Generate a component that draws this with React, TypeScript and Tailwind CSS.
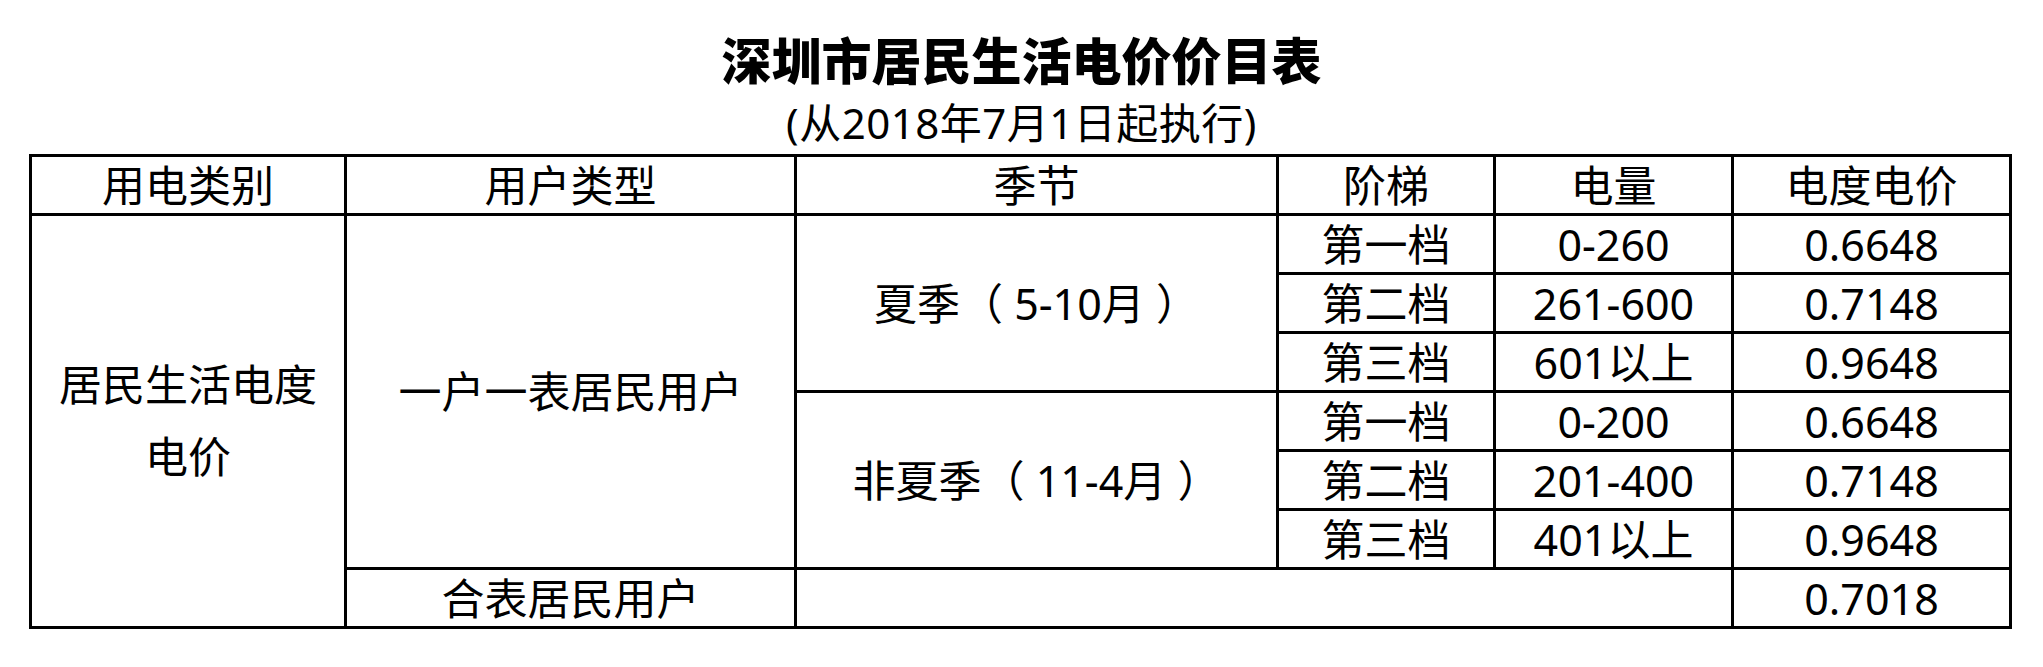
import React from "react";

const HEADERS = ["用电类别", "用户类型", "季节", "阶梯", "电量", "电度电价"];
const COLS = [315, 450, 482, 217, 238, 278];

const cell = "border-[3px] border-black p-0 text-center align-middle font-normal";

export default function App() {
  return (
    <div className="min-h-screen bg-white text-black font-['Noto_Sans','Noto_Sans_CJK_SC',sans-serif]">
      <div className="pt-[31px] text-center">
        <h1 className="text-[50px] leading-[60px] font-black">深圳市居民生活电价价目表</h1>
        <p className="mt-[8px] text-[42px] leading-[48px] tracking-[0.5px]">(从2018年7月1日起执行)</p>
      </div>

      <table className="ml-[29px] mt-[7px] w-[1983px] table-fixed border-collapse border-[3px] border-black text-[43px] leading-none">
        <colgroup>
          {COLS.map((w, i) => (
            <col key={i} style={{ width: w }} />
          ))}
        </colgroup>
        <thead>
          <tr className="h-[59px]">
            {HEADERS.map((h) => (
              <th key={h} className={cell}>
                {h}
              </th>
            ))}
          </tr>
        </thead>
        <tbody>
          <tr className="h-[59px]">
            <td rowSpan={7} className={`${cell} leading-[72px]`}>
              居民生活电度
              <br />
              电价
            </td>
            <td rowSpan={6} className={cell}>
              一户一表居民用户
            </td>
            <td rowSpan={3} className={`${cell} whitespace-pre`}>
              夏季（ 5-10月 ）
            </td>
            <td className={cell}>第一档</td>
            <td className={cell}>0-260</td>
            <td className={cell}>0.6648</td>
          </tr>
          <tr className="h-[59px]">
            <td className={cell}>第二档</td>
            <td className={cell}>261-600</td>
            <td className={cell}>0.7148</td>
          </tr>
          <tr className="h-[59px]">
            <td className={cell}>第三档</td>
            <td className={cell}>601以上</td>
            <td className={cell}>0.9648</td>
          </tr>
          <tr className="h-[59px]">
            <td rowSpan={3} className={`${cell} whitespace-pre`}>
              非夏季（ 11-4月 ）
            </td>
            <td className={cell}>第一档</td>
            <td className={cell}>0-200</td>
            <td className={cell}>0.6648</td>
          </tr>
          <tr className="h-[59px]">
            <td className={cell}>第二档</td>
            <td className={cell}>201-400</td>
            <td className={cell}>0.7148</td>
          </tr>
          <tr className="h-[59px]">
            <td className={cell}>第三档</td>
            <td className={cell}>401以上</td>
            <td className={cell}>0.9648</td>
          </tr>
          <tr className="h-[59px]">
            <td className={cell}>合表居民用户</td>
            <td colSpan={3} className={cell}></td>
            <td className={cell}>0.7018</td>
          </tr>
        </tbody>
      </table>
    </div>
  );
}
